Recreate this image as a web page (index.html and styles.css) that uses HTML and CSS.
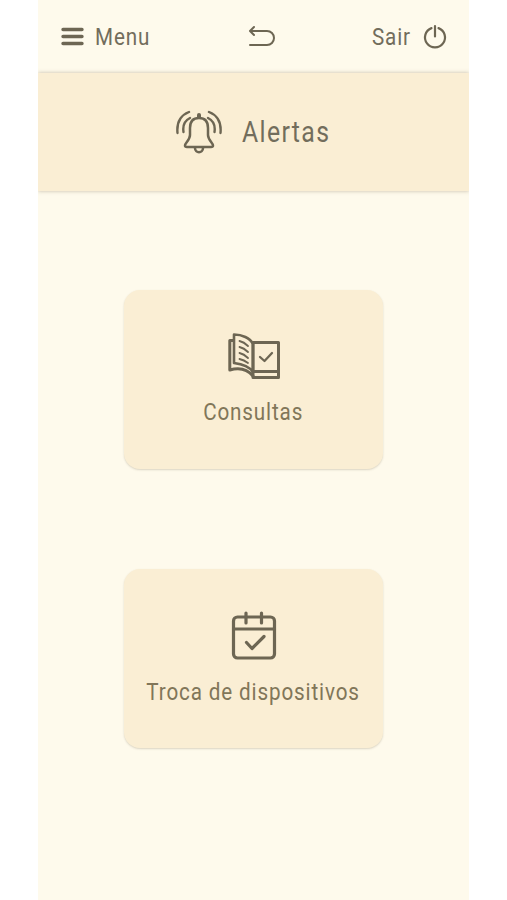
FILE: index.html
```
<!DOCTYPE html>
<html lang="pt-BR">
<head>
    <meta charset="UTF-8">
    <meta name="viewport" content="width=device-width, initial-scale=1.0">
    <title>Alertas</title>
    <link rel="stylesheet" href="styles.css">
</head>
<body>
    <div class="app">
        <nav class="topbar">
            <a class="nav-item">
                <svg width="24" height="20" viewBox="0 0 24 20" stroke-width="3.4">
                    <path d="M3 2.5H22M3 9.5H22M3 16.5H22"/>
                </svg>
                <span class="text menu-text">Menu</span>
            </a>
            <a class="nav-item back">
                <svg width="28" height="24" viewBox="0 0 28 24" stroke-width="2">
                    <path d="M6 2L2 6L6 10M2.5 6H19A7 7 0 0 1 19 20H2"/>
                </svg>
            </a>
            <a class="nav-item">
                <span class="text exit-text">Sair</span>
                <svg width="26" height="26" viewBox="0 0 26 26" stroke-width="2.2">
                    <path d="M9.5 4.1A10 10 0 1 0 16.5 4.1M13 2V12.5"/>
                </svg>
            </a>
        </nav>

        <header class="title">
            <svg width="48" height="46" viewBox="0 0 48 46" stroke-width="2.5">
                <path d="M24 9C17 9 15 14 15 19V26C15 31 10 34 10 36.5Q10 38 12 38H36Q38 38 38 36.5C38 34 33 31 33 26V19C33 14 31 9 24 9Z"/>
                <path d="M20 39C20 44.5 28 44.5 28 39"/>
                <path d="M24 8V6" stroke-width="4"/>
                <path d="M14 3Q1 8 2.5 24M15 9Q7 13 8.5 23M34 3Q47 8 45.5 24M33 9Q41 13 39.5 23" stroke-width="2.4"/>
            </svg>
            <h1 class="text title-text">Alertas</h1>
        </header>

        <main class="cards">
            <div class="card">
                <svg width="54" height="48" viewBox="0 0 54 48" stroke-width="3">
                    <path d="M6 8.5H2.8V38C13 35 21 38 26 44"/>
                    <path d="M7 2.5C15 2.5 23 6 26 12V40C22 34 15 32 7 31Z" stroke-width="2.6"/>
                    <path d="M26 10.5H51.5V45.5H26ZM26 39.5H51.5"/>
                    <path d="M12.5 9Q17 10 21 14M12.5 15Q17 16 21 20M12.5 21Q17 22 21 26M12.5 27Q17 28 21 31" stroke-width="1.8"/>
                    <path d="M33 25L37.5 29L45 21" stroke-width="2.3"/>
                </svg>
                <span class="text consult-text">Consultas</span>
            </div>
            <div class="card">
                <svg width="48" height="52" viewBox="0 0 48 52" stroke-width="3.2">
                    <rect x="3.5" y="6" width="41" height="41" rx="4"/>
                    <path d="M3.5 18H44.5M16 2V12M31.5 2V12"/>
                    <path d="M16.5 31.5L22 37.5L34 25.5"/>
                </svg>
                <span class="text device-text">Troca de dispositivos</span>
            </div>
        </main>
    </div>
</body>
</html>
```
FILE: styles.css
```
body {
    margin: 0;
    background-color: #fff;
    color: #726d5c;
    font-family: Roboto, "Liberation Sans", sans-serif;
}
.app {
    width: 431px;
    height: 900px;
    margin-left: 38px;
    background-color: #fefaec;
    overflow: hidden;
}
svg {
    display: block;
    flex: none;
    fill: none;
    stroke: #6d6653;
    stroke-linecap: round;
    stroke-linejoin: round;
}
.topbar {
    display: grid;
    grid-template-columns: 1fr 28px 1fr;
    align-items: center;
    height: 73px;
    padding: 0 21px 0 22px;
    box-sizing: border-box;
}
.nav-item {
    display: flex;
    align-items: center;
    min-width: 0;
}
.back {
    margin-left: 8px;
    margin-right: -8px;
}
.nav-item:last-child {
    justify-content: flex-end;
}
/* condensed lettering */
.text {
    display: block;
    font-size: 24px;
    line-height: 30px;
    font-weight: 400;
    letter-spacing: 1px;
    white-space: nowrap;
    transform: scaleX(0.86);
    transform-origin: left center;
}
.menu-text {
    margin-left: 11px;
}
.exit-text {
    margin-right: 5px;
}
.title {
    display: flex;
    align-items: center;
    height: 118px;
    padding: 0 0 1px 137px;
    box-sizing: border-box;
    background-color: #faeed4;
    box-shadow: 0 0 4px rgba(110, 95, 65, 0.4);
}
.title-text {
    margin: 0 0 0 19px;
    font-size: 29px;
    letter-spacing: 1.6px;
    transform: scaleX(0.855);
}
.cards {
    display: flex;
    flex-direction: column;
    align-items: center;
    gap: 100px;
    padding-top: 99px;
}
.card {
    display: flex;
    flex-direction: column;
    align-items: center;
    width: 259px;
    height: 179px;
    padding-top: 42px;
    box-sizing: border-box;
    border-radius: 16px;
    background-color: #faeed4;
    box-shadow: 0 1px 2px rgba(110, 95, 65, 0.24);
}
.card .text {
    color: #817659;
    transform-origin: center;
}
.consult-text {
    margin-top: 17px;
}
.device-text {
    margin-top: 14px;
}
```
